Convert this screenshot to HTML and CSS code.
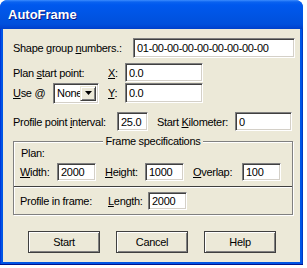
FILE: index.html
```html
<!DOCTYPE html>
<html lang="en">
<head>
    <meta charset="UTF-8">
    <title>AutoFrame</title>
    <link rel="stylesheet" href="styles.css">
</head>
<body>
    <div class="window">
        <div class="titlebar">AutoFrame</div>

        <div class="client">
            <div class="row row-shape">
                <label class="lbl-shape">Shape group <u>n</u>umbers.:</label>
                <input class="field f-shape" type="text" value="01-00-00-00-00-00-00-00-00">
            </div>

            <div class="row row-plan">
                <label class="lbl-plan">Plan <u>s</u>tart point:</label>
                <label class="lbl-xy"><u>X</u>:</label>
                <input class="field f-xy" type="text" value="0.0">
            </div>

            <div class="row row-use">
                <label class="lbl-use"><u>U</u>se @</label>
                <div class="combo">
                    <span class="combo-text">None</span>
                    <span class="combo-btn">
                        <svg width="7" height="4" viewBox="0 0 7 4"><path d="M0 0h7L3.5 4z" fill="#000"/></svg>
                    </span>
                </div>
                <label class="lbl-xy"><u>Y</u>:</label>
                <input class="field f-xy" type="text" value="0.0">
            </div>

            <div class="row row-profile">
                <label class="lbl-interval">Profile point <u>i</u>nterval:</label>
                <input class="field f-interval" type="text" value="25.0">
                <label class="lbl-km">Start <u>K</u>ilometer:</label>
                <input class="field f-km" type="text" value="0">
            </div>

            <fieldset class="group">
                <legend>Frame specifications</legend>
                <div class="plan-title">Plan:</div>
                <div class="row row-size">
                    <label class="lbl-width"><u>W</u>idth:</label>
                    <input class="field f-num" type="text" value="2000">
                    <label class="lbl-height"><u>H</u>eight:</label>
                    <input class="field f-num" type="text" value="1000">
                    <label class="lbl-overlap"><u>O</u>verlap:</label>
                    <input class="field f-num" type="text" value="100">
                </div>
                <div class="separator"></div>
                <div class="row row-length">
                    <label class="lbl-inframe">Profile in frame:</label>
                    <label class="lbl-height"><u>L</u>ength:</label>
                    <input class="field f-num" type="text" value="2000">
                </div>
            </fieldset>

            <div class="buttons">
                <button class="btn">Start</button>
                <button class="btn">Cancel</button>
                <button class="btn">Help</button>
            </div>
        </div>
    </div>
</body>
</html>
```

FILE: styles.css
```css
body {
    margin: 0;
    background: #fff;
    font-family: "Liberation Sans", Arial, sans-serif;
    font-size: 11px;
    letter-spacing: -0.3px;
    color: #000;
}

.window {
    width: 303px;
    height: 265px;
    box-sizing: border-box;
    padding: 0 3px 3px;
    background: linear-gradient(90deg, #0019cf 0, #0055e5 1px, #0055e5 calc(100% - 1px), #001ea0 100%);
    border-radius: 8px 8px 0 0;
    display: flex;
    flex-direction: column;
    box-shadow: inset 0 -1px 0 #00138c;
}

.titlebar {
    height: 29px;
    margin: 0 -3px;
    padding-left: 8px;
    display: flex;
    align-items: center;
    color: #fff;
    font-weight: bold;
    font-size: 13px;
    letter-spacing: 0;
    text-shadow: 1px 1px 0 #0a1883;
    border-radius: 7px 7px 0 0;
    background: linear-gradient(#3c8cfe 0, #0a62f0 2px, #0058ee 5px, #0054e3 16px, #0050dc 24px, #0046d4 27px, #0040c8 29px);
}

.client {
    flex: 1;
    background: #ece9d8;
    padding: 9px 0 0 10px;
}

.row {
    display: flex;
    align-items: center;
}

label u {
    text-decoration-thickness: 1px;
}

.field {
    box-sizing: border-box;
    height: 20px;
    margin: 0;
    padding: 0 3px;
    background: #fff;
    border: 1px solid;
    border-color: #808080 #fff #fff #808080;
    box-shadow: inset 1px 1px 0 #404040, inset -1px -1px 0 #d4d0c8;
    font: inherit;
    letter-spacing: inherit;
    color: #000;
    outline: none;
}

.lbl-shape { width: 120px; }
.f-shape { width: 162px; }

.row-plan { margin-top: 5px; height: 19px; }
.row-plan .field { height: 19px; }
.lbl-plan { width: 95px; }
.lbl-xy { width: 17px; }
.f-xy { width: 78px; }

.row-use { margin-top: 1px; height: 20px; }
.lbl-use { width: 40px; }
.combo {
    box-sizing: border-box;
    width: 46px;
    height: 21px;
    margin-right: 9px;
    display: flex;
    align-items: center;
    background: #fff;
    border: 1px solid;
    border-color: #808080 #fff #fff #808080;
    box-shadow: inset 1px 1px 0 #404040, inset -1px -1px 0 #d4d0c8;
    padding: 2px 2px 2px 3px;
    overflow: hidden;
}
.combo-text {
    flex: 1;
    overflow: hidden;
    white-space: nowrap;
}
.combo-btn {
    width: 16px;
    height: 15px;
    box-sizing: border-box;
    display: flex;
    align-items: center;
    justify-content: center;
    background: #ece9d8;
    border: 1px solid;
    border-color: #ece9d8 #404040 #404040 #ece9d8;
    box-shadow: inset 1px 1px 0 #fff, inset -1px -1px 0 #808080;
}

.row-profile { margin-top: 9px; height: 19px; }
.row-profile .field { height: 19px; }
.lbl-interval { width: 104px; }
.f-interval { width: 31px; margin-right: 9px; }
.lbl-km { width: 78px; }
.f-km { width: 57px; }

.group {
    width: 280px;
    box-sizing: border-box;
    margin: 4px 0 0;
    padding: 0 0 4px;
    border: 1px solid #808080;
    box-shadow: 1px 1px 0 #fff, inset 1px 1px 0 #fff;
    min-inline-size: 0;
}

.group legend {
    margin: 0 auto;
    padding: 0 3px;
    background: #ece9d8;
}

.plan-title {
    padding: 0 0 0 7px;
    height: 13px;
    line-height: 13px;
}

.row-size {
    margin-top: 3px;
    height: 18px;
    padding-left: 6px;
}
.row-size .field,
.row-length .field { height: 18px; }

.lbl-width { width: 37px; }
.lbl-height { width: 40px; }
.lbl-overlap { width: 49px; }
.f-num { width: 39px; margin-right: 9px; }

.separator {
    margin-top: 5px;
    border-top: 1px solid #404040;
    border-bottom: 1px solid #fff;
}

.row-length {
    margin-top: 4px;
    height: 18px;
    padding-left: 6px;
}
.lbl-inframe { width: 88px; }

.buttons {
    display: flex;
    gap: 16px;
    margin: 16px 0 0 15px;
}

.btn {
    box-sizing: border-box;
    width: 72px;
    height: 22px;
    margin: 0;
    padding: 0;
    background: #ece9d8;
    border: 1px solid #404040;
    box-shadow: inset 1px 1px 0 #fff, inset -1px -1px 0 #808080;
    font: inherit;
    letter-spacing: inherit;
    color: #000;
}
```
